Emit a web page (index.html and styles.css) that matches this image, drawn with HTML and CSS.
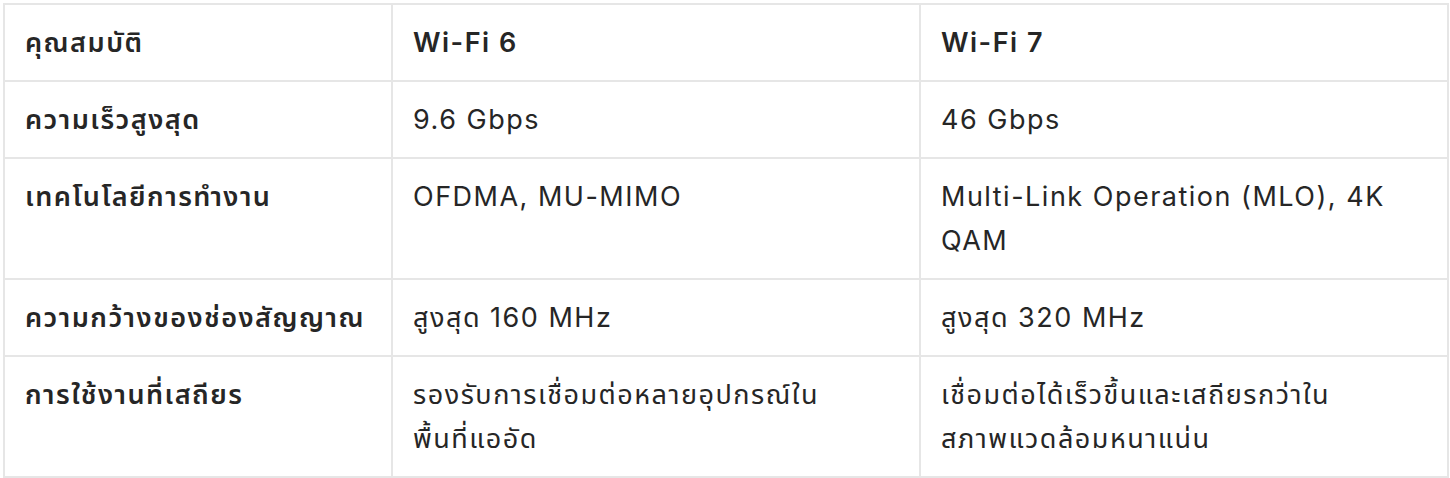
FILE: index.html
```html
<!DOCTYPE html>
<html lang="th">
<head>
<meta charset="utf-8">
<link rel="stylesheet" href="styles.css">
</head>
<body>
<table class="compare">
  <colgroup>
    <col class="c1"><col class="c2"><col class="c3">
  </colgroup>
  <thead>
    <tr><th>คุณสมบัติ</th><th>Wi-Fi 6</th><th>Wi-Fi 7</th></tr>
  </thead>
  <tbody>
    <tr><td class="label">ความเร็วสูงสุด</td><td>9.6 Gbps</td><td>46 Gbps</td></tr>
    <tr><td class="label">เทคโนโลยีการทำงาน</td><td>OFDMA, MU-MIMO</td><td>Multi-Link Operation (MLO), 4K QAM</td></tr>
    <tr><td class="label">ความกว้างของช่องสัญญาณ</td><td>สูงสุด 160 MHz</td><td>สูงสุด 320 MHz</td></tr>
    <tr><td class="label">การใช้งานที่เสถียร</td><td>รองรับการเชื่อมต่อหลายอุปกรณ์ใน <span class="keep">พื้นที่แออัด</span></td><td>เชื่อมต่อได้เร็วขึ้นและเสถียรกว่าใน <span class="keep">สภาพแวดล้อมหนาแน่น</span></td></tr>
  </tbody>
</table>
</body>
</html>
```
FILE: styles.css
```css
html, body {
  margin: 0;
  padding: 0;
  background: #ffffff;
}
body {
  padding: 3px;
  font-family: Inter, "Noto Sans", "Noto Sans Thai", sans-serif;
  color: #262626;
}
.compare {
  width: 1444px;
  border-collapse: collapse;
  table-layout: fixed;
  font-size: 27px;
  line-height: 44px;
  letter-spacing: 1.5px;
}
.c1 { width: 388px; }
.c2 { width: 528px; }
.c3 { width: 528px; }
.compare th,
.compare td {
  border: 2px solid #e6e6e6;
  padding: 16px 20px 15px 20px;
  text-align: left;
  vertical-align: top;
}
.compare th {
  font-weight: 600;
}
.compare td.label {
  font-weight: 600;
}
.keep {
  white-space: nowrap;
}
```
